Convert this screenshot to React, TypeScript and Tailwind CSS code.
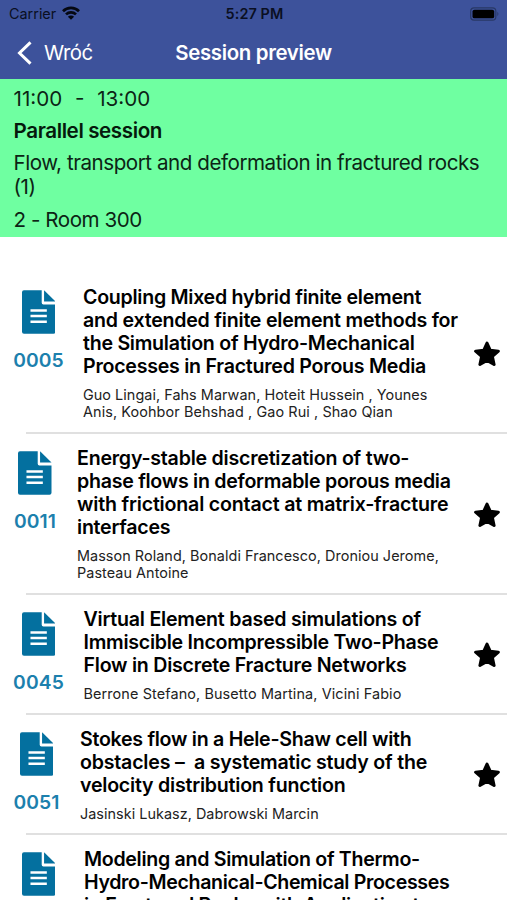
type Line = { text: string; tracking: string };

type Talk = {
  id: string;
  title: Line[];
  authors: Line[];
  height: string;
  column: string;
};

const talks: Talk[] = [
  {
    id: "0005",
    title: [
      { text: "Coupling Mixed hybrid finite element", tracking: "tracking-[-0.28px]" },
      { text: "and extended finite element methods for", tracking: "tracking-[-0.23px]" },
      { text: "the Simulation of Hydro-Mechanical", tracking: "tracking-[-0.27px]" },
      { text: "Processes in Fractured Porous Media", tracking: "tracking-[-0.25px]" },
    ],
    authors: [
      { text: "Guo Lingai, Fahs Marwan, Hoteit Hussein , Younes", tracking: "tracking-[0.05px]" },
      { text: "Anis, Koohbor Behshad , Gao Rui , Shao Qian", tracking: "tracking-[0.1px]" },
    ],
    height: "h-[161px]",
    column: "w-[49px] mr-[20px]",
  },
  {
    id: "0011",
    title: [
      { text: "Energy-stable discretization of two-", tracking: "tracking-[-0.23px]" },
      { text: "phase flows in deformable porous media", tracking: "tracking-[-0.27px]" },
      { text: "with frictional contact at matrix-fracture", tracking: "tracking-[-0.19px]" },
      { text: "interfaces", tracking: "tracking-[-0.25px]" },
    ],
    authors: [
      { text: "Masson Roland, Bonaldi Francesco, Droniou Jerome,", tracking: "tracking-[0.06px]" },
      { text: "Pasteau Antoine", tracking: "tracking-[0.06px]" },
    ],
    height: "h-[161px]",
    column: "w-[42px] mr-[21px]",
  },
  {
    id: "0045",
    title: [
      { text: "Virtual Element based simulations of", tracking: "tracking-[-0.23px]" },
      { text: "Immiscible Incompressible Two-Phase", tracking: "tracking-[-0.27px]" },
      { text: "Flow in Discrete Fracture Networks", tracking: "tracking-[-0.24px]" },
    ],
    authors: [
      { text: "Berrone Stefano, Busetto Martina, Vicini Fabio", tracking: "tracking-[0.12px]" },
    ],
    height: "h-[120px]",
    column: "w-[49px] mr-[20.5px]",
  },
  {
    id: "0051",
    title: [
      { text: "Stokes flow in a Hele-Shaw cell with", tracking: "tracking-[-0.28px]" },
      { text: "obstacles –  a systematic study of the", tracking: "tracking-[-0.21px]" },
      { text: "velocity distribution function", tracking: "tracking-[-0.23px]" },
    ],
    authors: [{ text: "Jasinski Lukasz, Dabrowski Marcin", tracking: "tracking-[0.04px]" }],
    height: "h-[120px]",
    column: "w-[45px] mr-[21px]",
  },
  {
    id: "0062",
    title: [
      { text: "Modeling and Simulation of Thermo-", tracking: "tracking-[-0.3px]" },
      { text: "Hydro-Mechanical-Chemical Processes", tracking: "tracking-[-0.35px]" },
      { text: "in Fractured Rocks with Application to", tracking: "tracking-[-0.3px]" },
    ],
    authors: [],
    height: "h-[161px]",
    column: "w-[49px] mr-[21px]",
  },
];

function PaperIcon() {
  return (
    <svg className="block h-[44px] w-[33.5px] shrink-0" viewBox="0 0 34 44" fill="#04709f">
      <path
        fillRule="evenodd"
        d="M2 0H20V12.6Q20 14.3 21.7 14.3H34V42Q34 44 32 44H2Q0 44 0 42V2Q0 0 2 0ZM8.6 19.1V21.7H25.2V19.1ZM8.6 24.8V27.4H25.2V24.8ZM8.6 30.5V33.1H25.2V30.5Z"
      />
      <path d="M22.4 0L34 11.4H22.4Z" />
    </svg>
  );
}

function StarIcon() {
  return (
    <svg
      className="h-[26px] w-[26px]"
      viewBox="0 0 26 26"
      fill="black"
      stroke="black"
      strokeWidth="3"
      strokeLinejoin="round"
    >
      <path d="M13 2L16.3 9.3L24.4 10.2L18.4 15.5L20.1 23.5L13 19.4L5.9 23.5L7.6 15.5L1.6 10.2L9.7 9.3Z" />
    </svg>
  );
}

function Lines({ lines }: { lines: Line[] }) {
  return (
    <>
      {lines.map((line) => (
        <span key={line.text} className={`block ${line.tracking}`}>
          {line.text}
        </span>
      ))}
    </>
  );
}

function TalkRow({ talk }: { talk: Talk }) {
  return (
    <li className={`relative flex shrink-0 pl-[14px] ${talk.height}`}>
      <div className={`flex shrink-0 flex-col items-center pt-[17px] ${talk.column}`}>
        <PaperIcon />
        <span className="mt-[14px] text-[19.3px] leading-6 font-semibold tracking-[0.1px] whitespace-pre text-[#1c80ad]">
          {talk.id}
        </span>
      </div>
      <div className="min-w-0 flex-1 pt-[12.5px] whitespace-pre">
        <h2 className="text-[19.6px] leading-[23.25px] font-semibold">
          <Lines lines={talk.title} />
        </h2>
        <p className="mt-[7.5px] text-[14.4px] leading-[17.2px] text-[#222]">
          <Lines lines={talk.authors} />
        </p>
      </div>
      <div className="flex w-[33.5px] shrink-0 items-center">
        <StarIcon />
      </div>
      <div className="absolute right-0 bottom-0 left-[26px] h-[2px] bg-[#e0e0e0]" />
    </li>
  );
}

export default function App() {
  return (
    <div className="flex h-[900px] w-[507px] flex-col overflow-hidden bg-white font-['Inter','Liberation_Sans',sans-serif] text-black">
      <header className="h-[79px] shrink-0 bg-[#3d529b]">
        <div className="grid h-[27px] grid-cols-3 items-center pr-[7px] pl-[9px] text-[14.4px]">
          <div className="flex items-center gap-[6px] text-[#0a0f22]">
            <span>Carrier</span>
            <svg className="h-[14px] w-[18px]" viewBox="0 0 18 14" fill="none" stroke="#050812" strokeWidth="2.7">
              <path d="M1 5.2A11.4 11.4 0 0 1 17 5.2" />
              <path d="M4 8.4A7.2 7.2 0 0 1 14 8.4" />
              <path d="M9 13.8L5.9 10.7A4.4 4.4 0 0 1 12.1 10.7Z" fill="#050812" stroke="none" />
            </svg>
          </div>
          <span className="text-center font-semibold tracking-[0.1px] text-[#0a0f22]">5:27 PM</span>
          <svg className="h-[14px] w-[30px] justify-self-end" viewBox="0 0 31 14">
            <rect x="0.7" y="0.7" width="26" height="12.6" rx="3.5" fill="none" stroke="#283866" strokeWidth="1.2" />
            <rect x="2.6" y="2.5" width="22.4" height="9" rx="2" fill="#000" />
            <path d="M28.3 4.8Q30.3 7 28.3 9.2Z" fill="#283866" />
          </svg>
        </div>
        <div className="grid h-[52px] grid-cols-3 items-center text-white">
          <div className="flex items-center gap-[12px] pl-[17px] text-[20.4px] tracking-[-0.5px]">
            <svg className="h-[24px] w-[15px]" viewBox="0 0 15 24" fill="none" stroke="white" strokeWidth="3">
              <path d="M13.5 1.3L2.5 12L13.5 22.7" />
            </svg>
            <span>Wróć</span>
          </div>
          <h1 className="text-center text-[20.4px] font-semibold tracking-[-0.33px] whitespace-nowrap">
            Session preview
          </h1>
        </div>
      </header>
      <section className="h-[158px] shrink-0 bg-[#6fffa1] pt-[7.5px] pl-[13.5px] text-[20.6px] leading-[24.5px] tracking-[-0.46px] whitespace-pre text-[#0c2415]">
        <p className="tracking-[0px] [word-spacing:0.6px]">{"11:00  -  13:00"}</p>
        <p className="mt-[7.5px] font-semibold tracking-[-0.4px] text-[#051a0c]">Parallel session</p>
        <p className="mt-[7.5px]">{"Flow, transport and deformation in fractured rocks\n(1)"}</p>
        <p className="mt-[8px]">2 - Room 300</p>
      </section>
      <ul className="flex flex-col pt-[36px]">
        {talks.map((talk) => (
          <TalkRow key={talk.id} talk={talk} />
        ))}
      </ul>
    </div>
  );
}
